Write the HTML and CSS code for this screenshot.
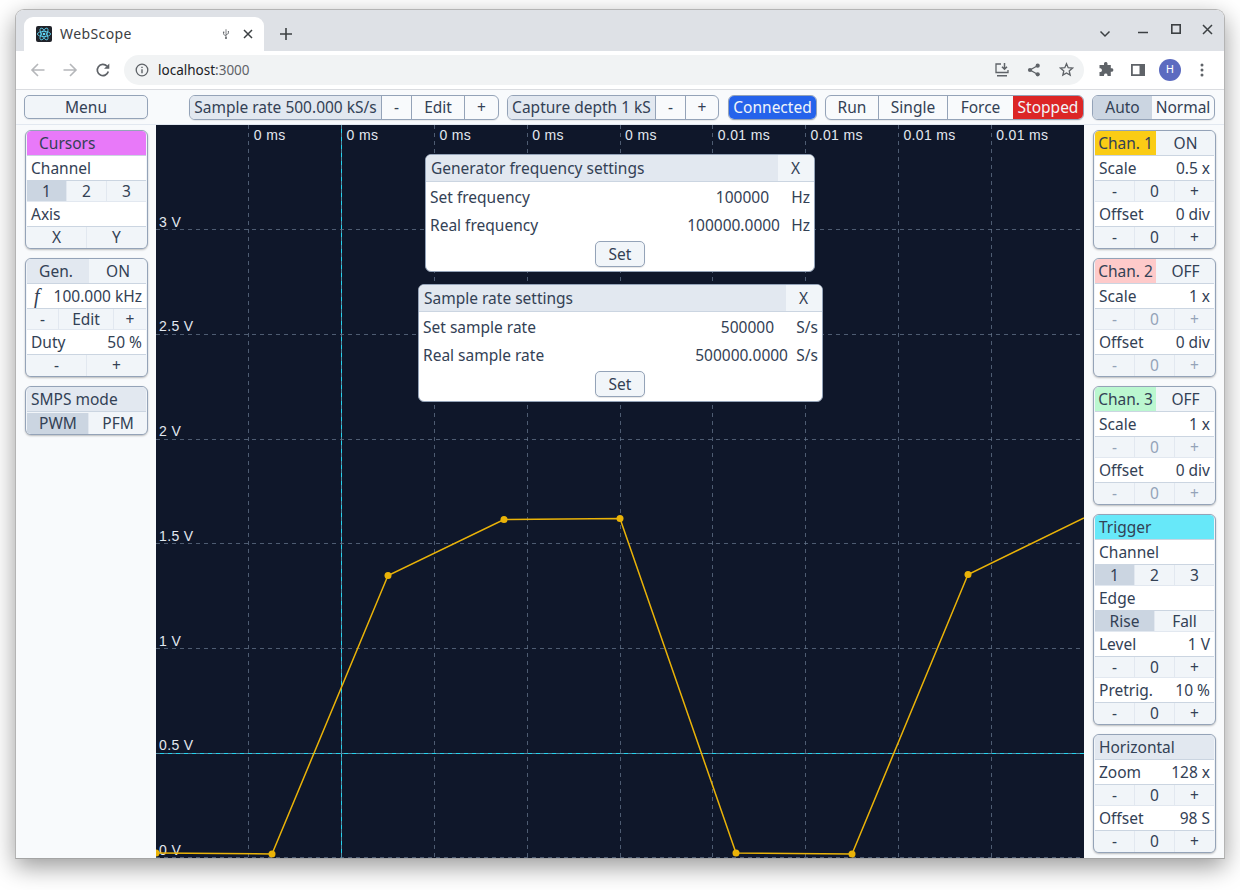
FILE: index.html
```html
<!DOCTYPE html>
<html lang="en">
<head>
<meta charset="utf-8">
<title>WebScope</title>
<link rel="stylesheet" href="styles.css">
</head>
<body>
<div class="window">
  <div class="tabstrip">
    <div class="tab">
      <svg class="favicon" width="16" height="16" viewBox="0 0 16 16"><rect width="16" height="16" rx="2" fill="#20232a"/><g fill="none" stroke="#61dafb" stroke-width=".8"><ellipse cx="8" cy="8" rx="6.6" ry="2.6"/><ellipse cx="8" cy="8" rx="6.6" ry="2.6" transform="rotate(60 8 8)"/><ellipse cx="8" cy="8" rx="6.6" ry="2.6" transform="rotate(120 8 8)"/></g><circle cx="8" cy="8" r="1.3" fill="#61dafb"/></svg>
      <span class="tab-title">WebScope</span>
      <svg class="usb" width="8" height="12" viewBox="0 0 10 14"><path d="M5 1v12M5 9.500 2 7.500V5.500M5 8l3-1.600V4.500" fill="none" stroke="#5f6368" stroke-width="1"/><circle cx="5" cy="12" r="1.200" fill="#5f6368"/><rect x="1.200" y="4" width="1.700" height="1.700" fill="#5f6368"/><circle cx="8" cy="4" r=".9" fill="#5f6368"/></svg>
      <svg class="tab-x" width="10" height="10" viewBox="0 0 10 10"><path d="M1 1l8 8M9 1 1 9" stroke="#3c4043" stroke-width="1.500"/></svg>
    </div>
    <svg class="newtab" width="12" height="12" viewBox="0 0 12 12"><path d="M6 0v12M0 6h12" stroke="#3c4043" stroke-width="1.600"/></svg>
    <div class="winctl">
      <svg class="wc-chev" width="12" height="8" viewBox="0 0 12 8"><path d="M1.500 1.500 6 6l4.500-4.500" fill="none" stroke="#3c4043" stroke-width="1.500"/></svg>
      <svg class="wc-min" width="11" height="3" viewBox="0 0 11 3"><path d="M0 1.500h10" stroke="#3c4043" stroke-width="1.600"/></svg>
      <svg class="wc-max" width="10" height="10" viewBox="0 0 10 10"><rect x=".8" y=".8" width="8.400" height="8.400" fill="none" stroke="#3c4043" stroke-width="1.600"/></svg>
      <svg class="wc-close" width="11" height="11" viewBox="0 0 11 11"><path d="M1 1l9 9M10 1l-9 9" stroke="#3c4043" stroke-width="1.500"/></svg>
    </div>
  </div>
  <div class="toolbar">
    <svg class="nav" width="16" height="16" viewBox="0 0 16 16"><path d="M14.500 8H2M8 2 2 8l6 6" fill="none" stroke="#b5b7ba" stroke-width="1.600"/></svg>
    <svg class="nav nav-fwd" width="16" height="16" viewBox="0 0 16 16"><path d="M1.500 8H14M8 2l6 6-6 6" fill="none" stroke="#b5b7ba" stroke-width="1.600"/></svg>
    <svg class="nav" width="16" height="16" viewBox="0 0 16 16"><path d="M13.300 9.500A5.600 5.600 0 1 1 12 4.200" fill="none" stroke="#5f6368" stroke-width="1.700"/><path d="M14.300 1.500v5.200H9.100z" fill="#5f6368"/></svg>
    <div class="omnibox">
      <svg class="info" width="14" height="14" viewBox="0 0 14 14"><circle cx="7" cy="7" r="5.800" fill="none" stroke="#5f6368" stroke-width="1.300"/><path d="M7 6.200v4M7 3.700v1.400" stroke="#5f6368" stroke-width="1.400"/></svg>
      <span class="url">localhost<span class="url-port">:3000</span></span>
      <svg class="om-ico om-first" width="16" height="16" viewBox="0 0 16 16"><path d="M7 2H2v8.500h12V8" fill="none" stroke="#5f6368" stroke-width="1.300"/><path d="M10.500 1v6M8 4.800l2.500 2.500L13 4.800" fill="none" stroke="#5f6368" stroke-width="1.500"/><path d="M3 13h10v1.500H3z" fill="#5f6368"/></svg>
      <svg class="om-ico" width="14" height="14" viewBox="0 0 14 14"><path d="M10.500 2.800 3 7l7.500 4.200" fill="none" stroke="#5f6368" stroke-width="1.300"/><circle cx="10.700" cy="2.700" r="2.100" fill="#5f6368"/><circle cx="3" cy="7" r="2.100" fill="#5f6368"/><circle cx="10.700" cy="11.300" r="2.100" fill="#5f6368"/></svg>
      <svg class="om-ico om-star" width="15" height="15" viewBox="0 0 15 15"><path d="M7.500 1.700 9.200 5.700l4.300.4-3.300 2.800 1 4.200-3.700-2.200-3.700 2.200 1-4.200L1.500 6.100l4.300-.4z" fill="none" stroke="#5f6368" stroke-width="1.300"/></svg>
    </div>
    <svg class="ext" width="16" height="16" viewBox="0 0 16 16"><path d="M6 1.500a1.800 1.800 0 0 1 3.500 0V3h3.300v3.300h1.200a1.800 1.800 0 0 1 0 3.500h-1.200v4.200H9.500v-1a1.800 1.800 0 0 0-3.500 0v1H1.500v-4h1a1.900 1.900 0 0 0 0-3.700h-1V3H6z" fill="#5f6368"/></svg>
    <svg class="side" width="14" height="12" viewBox="0 0 14 12"><path d="M0 0h14v12H0zM1.800 1.800v8.400h6.700V1.800z" fill="#5f6368" fill-rule="evenodd"/></svg>
    <div class="avatar">H</div>
    <svg class="kebab" width="4" height="14" viewBox="0 0 4 14"><circle cx="2" cy="2" r="1.500" fill="#5f6368"/><circle cx="2" cy="7" r="1.500" fill="#5f6368"/><circle cx="2" cy="12" r="1.500" fill="#5f6368"/></svg>
  </div>

  <div class="app">
    <div class="topbar">
      <button class="tb tb-menu">Menu</button>
      <div class="tbgroup g-rate">
        <span class="seg seg-title w-rate">Sample rate 500.000 kS/s</span>
        <span class="seg w-30">-</span><span class="seg w-53">Edit</span><span class="seg grow">+</span>
      </div>
      <div class="tbgroup g-depth">
        <span class="seg seg-title w-depth">Capture depth 1 kS</span>
        <span class="seg w-30">-</span><span class="seg grow">+</span>
      </div>
      <div class="tbgroup g-conn"><span class="seg seg-conn grow">Connected</span></div>
      <div class="tbgroup g-run">
        <span class="seg w-run">Run</span><span class="seg w-single">Single</span><span class="seg w-force">Force</span><span class="seg seg-stop grow">Stopped</span>
      </div>
      <div class="tbgroup g-mode">
        <span class="seg seg-on w-auto">Auto</span><span class="seg grow">Normal</span>
      </div>
    </div>

    <div class="main">
      <aside class="sidebar">
        <section class="panel">
          <div class="title t-cursors"><span class="indent">Cursors</span></div>
          <div class="row"><span>Channel</span></div>
          <div class="btns"><span class="on">1</span><span>2</span><span>3</span></div>
          <div class="row"><span>Axis</span></div>
          <div class="btns"><span>X</span><span>Y</span></div>
        </section>
        <section class="panel">
          <div class="title split"><span class="t-part t-gen">Gen.</span><span class="t-toggle">ON</span></div>
          <div class="row"><i class="fsym">f</i><span>100.000 kHz</span></div>
          <div class="btns edit"><span>-</span><span>Edit</span><span>+</span></div>
          <div class="row"><span>Duty</span><span>50 %</span></div>
          <div class="btns"><span>-</span><span>+</span></div>
        </section>
        <section class="panel">
          <div class="title">SMPS mode</div>
          <div class="btns pair"><span class="on">PWM</span><span>PFM</span></div>
        </section>
      </aside>

      <div class="plot">
        <svg class="scope" width="928" height="733" viewBox="0 0 928 733">
          <path class="cursor" d="M185.500 0V733M0 628.500H928"/>
          <g class="grid">
            <path d="M92.800 0V733M185.600 0V733M278.400 0V733M371.200 0V733M464 0V733M556.800 0V733M649.600 0V733M742.400 0V733M835.200 0V733"/>
            <path d="M0 104.300H928M0 209.200H928M0 314H928M0 418.800H928M0 523.600H928M0 628.400H928M0 732.500H928"/>
          </g>
          <g class="xlab">
            <text x="97.800" y="15">0 ms</text><text x="190.600" y="15">0 ms</text><text x="283.400" y="15">0 ms</text><text x="376.200" y="15">0 ms</text><text x="469" y="15">0 ms</text><text x="561.800" y="15">0.01 ms</text><text x="654.600" y="15">0.01 ms</text><text x="747.400" y="15">0.01 ms</text><text x="840.200" y="15">0.01 ms</text>
          </g>
          <g class="ylab">
            <text x="3" y="102">3 V</text><text x="3" y="206">2.5 V</text><text x="3" y="311">2 V</text><text x="3" y="416">1.5 V</text><text x="3" y="521">1 V</text><text x="3" y="625">0.5 V</text><text x="3" y="730">0 V</text>
          </g>
          <polyline class="trace" points="0,728 116,729 232,450.500 348,394.500 464,393.500 580,728 696,729 812,449.500 928,393"/>
          <g class="dots">
            <circle cx="0" cy="728" r="3.500"/><circle cx="116" cy="729" r="3.500"/><circle cx="232" cy="450.500" r="3.500"/><circle cx="348" cy="394.500" r="3.500"/><circle cx="464" cy="393.500" r="3.500"/><circle cx="580" cy="728" r="3.500"/><circle cx="696" cy="729" r="3.500"/><circle cx="812" cy="449.500" r="3.500"/>
          </g>
        </svg>
        <div class="dialog d-gen">
          <div class="d-head"><span class="d-title">Generator frequency settings</span><span class="d-x">X</span></div>
          <div class="d-row"><span>Set frequency</span><span class="d-val d-inp">100000</span><span class="d-unit">Hz</span></div>
          <div class="d-row"><span>Real frequency</span><span class="d-val">100000.0000</span><span class="d-unit">Hz</span></div>
          <div class="d-foot"><button class="d-set">Set</button></div>
        </div>
        <div class="dialog d-rate">
          <div class="d-head"><span class="d-title">Sample rate settings</span><span class="d-x">X</span></div>
          <div class="d-row"><span>Set sample rate</span><span class="d-val d-inp">500000</span><span class="d-unit">S/s</span></div>
          <div class="d-row"><span>Real sample rate</span><span class="d-val">500000.0000</span><span class="d-unit">S/s</span></div>
          <div class="d-foot"><button class="d-set">Set</button></div>
        </div>
      </div>

      <aside class="sidebar">
        <section class="panel">
          <div class="title split"><span class="t-part t-c1">Chan. 1</span><span class="t-toggle">ON</span></div>
          <div class="row"><span>Scale</span><span>0.5 x</span></div>
          <div class="btns"><span>-</span><span>0</span><span>+</span></div>
          <div class="row"><span>Offset</span><span>0 div</span></div>
          <div class="btns"><span>-</span><span>0</span><span>+</span></div>
        </section>
        <section class="panel">
          <div class="title split"><span class="t-part t-c2">Chan. 2</span><span class="t-toggle">OFF</span></div>
          <div class="row"><span>Scale</span><span>1 x</span></div>
          <div class="btns off"><span>-</span><span>0</span><span>+</span></div>
          <div class="row"><span>Offset</span><span>0 div</span></div>
          <div class="btns off"><span>-</span><span>0</span><span>+</span></div>
        </section>
        <section class="panel">
          <div class="title split"><span class="t-part t-c3">Chan. 3</span><span class="t-toggle">OFF</span></div>
          <div class="row"><span>Scale</span><span>1 x</span></div>
          <div class="btns off"><span>-</span><span>0</span><span>+</span></div>
          <div class="row"><span>Offset</span><span>0 div</span></div>
          <div class="btns off"><span>-</span><span>0</span><span>+</span></div>
        </section>
        <section class="panel">
          <div class="title t-trigger">Trigger</div>
          <div class="row"><span>Channel</span></div>
          <div class="btns"><span class="on">1</span><span>2</span><span>3</span></div>
          <div class="row"><span>Edge</span></div>
          <div class="btns"><span class="on">Rise</span><span>Fall</span></div>
          <div class="row"><span>Level</span><span>1 V</span></div>
          <div class="btns"><span>-</span><span>0</span><span>+</span></div>
          <div class="row"><span>Pretrig.</span><span>10 %</span></div>
          <div class="btns"><span>-</span><span>0</span><span>+</span></div>
        </section>
        <section class="panel">
          <div class="title">Horizontal</div>
          <div class="row"><span>Zoom</span><span>128 x</span></div>
          <div class="btns"><span>-</span><span>0</span><span>+</span></div>
          <div class="row"><span>Offset</span><span>98 S</span></div>
          <div class="btns"><span>-</span><span>0</span><span>+</span></div>
        </section>
      </aside>
    </div>
  </div>
</div>
</body>
</html>
```
FILE: styles.css
```css
* { box-sizing: border-box; }
html, body { margin: 0; height: 890px; overflow: hidden; background: #fff; }
body { padding: 9px 15px; font-family: "Noto Sans", sans-serif; font-size: 15.5px; color: #334155; }

.window { width: 1210px; height: 850px; border: 1px solid #b4b4b4; border-bottom-color: #a4a4a4; border-radius: 9px 9px 0 0; box-shadow: 0 8px 24px rgba(0,0,0,.4); display: flex; flex-direction: column; overflow: hidden; background: #fff; }

.tabstrip { height: 41px; flex: none; background: #dee1e6; display: flex; align-items: flex-end; padding-left: 8px; }
.tab { width: 240px; height: 34px; background: #fff; border-radius: 9px 9px 0 0; display: flex; align-items: center; padding-left: 12px; color: #3c4043; }
.favicon { flex: none; }
.tab-title { margin-left: 8px; width: 158px; padding-bottom: 2px; letter-spacing: .4px; font-size: 14px; }
.usb { margin-left: 4px; }
.tab-x { margin-left: 13px; }
.newtab { margin: 0 0 11px 16px; }
.winctl { margin-left: auto; display: flex; align-items: center; height: 41px; padding-right: 11px; align-self: flex-start; }
.wc-chev { margin-top: 6px; }
.wc-min { margin-left: 27px; margin-top: 4px; }
.wc-max { margin-left: 22px; margin-top: -3px; }
.wc-close { margin-left: 21px; margin-top: -3px; }

.toolbar { height: 39px; flex: none; background: #fff; border-bottom: 1px solid #dadce0; display: flex; align-items: center; padding-left: 14px; padding-bottom: 1px; }
.nav { margin-right: 16px; flex: none; }
.nav-fwd { margin-right: 17px; }
.omnibox { width: 960px; height: 30px; margin-left: -3px; border-radius: 15px; background: #f1f3f4; display: flex; align-items: center; padding-left: 11px; }
.info { flex: none; }
.url { margin-left: 9px; font-size: 13.500px; color: #202124; }
.url-port { color: #5f6368; }
.om-ico { margin-left: 17px; flex: none; }
.om-first { margin-left: auto; }
.om-star { margin-left: 18px; margin-right: 10px; }
.ext { margin-left: 14px; flex: none; }
.side { margin-left: 17px; flex: none; }
.avatar { margin-left: 14px; width: 22px; height: 22px; border-radius: 50%; background: #5c6bc0; color: #fff; font-family: Roboto, sans-serif; font-size: 11px; display: flex; align-items: center; justify-content: center; flex: none; }
.kebab { margin-left: 19px; flex: none; }

.app { flex: 1; min-height: 0; background: #f8fafc; display: flex; flex-direction: column; }
.topbar { height: 35px; flex: none; display: flex; align-items: flex-start; padding: 5px 0 0 8px; border-bottom: 1px solid #e2e8f0; }
.tb { font: inherit; color: inherit; padding: 0; }
.tb-menu { width: 124px; height: 24px; background: #f1f5f9; border: 1px solid #94a3b8; border-radius: 5px; box-shadow: 0 1px 1px rgba(0,0,0,.08); }
.tbgroup { height: 25px; display: flex; background: #f8fafc; border: 1px solid #94a3b8; border-radius: 6px; overflow: hidden; box-shadow: 0 1px 1px rgba(0,0,0,.08); }
.seg { display: flex; align-items: center; justify-content: center; border-right: 1px solid #94a3b8; white-space: nowrap; padding-bottom: 1px; }
.seg:last-child { border-right: 0; }
.seg-title { background: #e2e8f0; }
.seg-on { background: #cbd5e1; border-right: 0; }
.grow { flex: 1; }
.g-rate { width: 310px; margin-left: 41px; }
.g-depth { width: 212px; margin-left: 8px; }
.g-conn { width: 89px; margin-left: 9px; }
.g-run { width: 259px; margin-left: 8px; }
.g-mode { width: 123px; margin-left: 8px; }
.w-rate { width: 192px; }
.w-depth { width: 148px; }
.w-30 { width: 30px; }
.w-53 { width: 53px; }
.seg-conn { background: #2563eb; color: #f1f5f9; }
.w-run { width: 53px; }
.w-single { width: 69px; }
.w-force { width: 65px; border-right: 0; }
.seg-stop { background: #dc2626; color: #f1f5f9; }
.w-auto { width: 59px; }

.main { flex: 1; min-height: 0; display: flex; }
.sidebar { width: 140px; flex: none; display: flex; flex-direction: column; gap: 9px; padding: 5px 8px 0 9px; }
.panel { border: 1px solid #94a3b8; border-radius: 6px; overflow: hidden; padding: 0 1px; background: #f1f5f9; flex: none; box-shadow: 0 1px 2px rgba(0,0,0,.25); }
.title { height: 25px; background: #e2e8f0; border-bottom: 1px solid #cbd5e1; border-radius: 4px 4px 0 0; overflow: hidden; padding: 0 4px; display: flex; align-items: center; white-space: nowrap; }
.indent { padding-left: 8px; }
.split { padding: 0; }
.t-part { width: 61px; height: 100%; display: flex; align-items: center; justify-content: center; }
.t-toggle { flex: 1; height: 100%; padding-left: 1px; background: #f1f5f9; display: flex; align-items: center; justify-content: center; }
.t-cursors { background: #e879f9; }
.t-gen { background: #e2e8f0; width: 62px; padding-right: 4px; }
.t-c1 { background: #facc15; }
.t-c2 { background: #fecaca; }
.t-c3 { background: #bbf7d0; }
.t-trigger { background: #67e8f9; }
.row { height: 25px; display: flex; align-items: center; justify-content: space-between; padding: 0 4px; background: #fff; border-bottom: 1px solid #cbd5e1; white-space: nowrap; }
.fsym { font-family: "Liberation Serif", serif; font-size: 20px; line-height: 1; margin-left: 3px; }
.btns { height: 21px; display: flex; background: #f1f5f9; border-bottom: 1px solid #e2e8f0; }
.btns:last-child { border-bottom: 0; }
.btns span { flex: 1 1 0; display: flex; align-items: center; justify-content: center; border-right: 1px solid #e2e8f0; padding-bottom: 1px; white-space: nowrap; }
.btns span:last-child { border-right: 0; }
.btns .on { background: #cbd5e1; }
.btns.off { color: #94a3b8; }
.edit span { flex: 0 0 32px; }
.edit span:nth-child(2) { flex: 1; }
.pair { margin-top: 1px; }
.pair span { padding-left: 1px; }
.pair .on { flex: 0 0 62px; }

.plot { position: relative; flex: 1; min-width: 0; background: #0f172a; overflow: hidden; }
.scope { display: block; }
.grid path { fill: none; stroke: #64748b; stroke-opacity: .75; stroke-width: 1; stroke-dasharray: 4 4; shape-rendering: crispEdges; }
.xlab text, .ylab text { fill: #e2e8f0; font-family: "Liberation Sans", sans-serif; font-size: 14px; letter-spacing: .35px; }
.cursor { fill: none; stroke: #22d3ee; stroke-width: 1; shape-rendering: crispEdges; }
.trace { fill: none; stroke: #eab308; stroke-width: 1.500; }
.dots circle { fill: #eab308; }

.dialog { position: absolute; background: #fff; border: 1px solid #94a3b8; border-radius: 6px; overflow: hidden; }
.d-gen { left: 269px; top: 29px; width: 390px; height: 118px; }
.d-rate { left: 262px; top: 159px; width: 405px; height: 118px; }
.d-head { height: 27px; margin-bottom: 1px; background: #e2e8f0; border-bottom: 1px solid #cbd5e1; display: flex; align-items: center; justify-content: space-between; padding-left: 5px; }
.d-x { width: 36px; height: 100%; padding-right: 1px; background: #f1f5f9; display: flex; align-items: center; justify-content: center; }
.d-row { height: 28px; display: flex; align-items: center; padding: 0 4px; }
.d-val { margin-left: auto; }
.d-gen .d-inp { margin-right: 11px; }
.d-rate .d-inp { margin-right: 14px; }
.d-unit { width: 30px; text-align: right; }
.d-foot { display: flex; justify-content: center; padding-top: 2px; }
.d-rate .d-foot { padding-right: 1px; }
.d-set { width: 50px; height: 26px; padding: 0; font: inherit; color: inherit; background: #f1f5f9; border: 1px solid #94a3b8; border-radius: 5px; box-shadow: 0 1px 1px rgba(0,0,0,.1); }
```
